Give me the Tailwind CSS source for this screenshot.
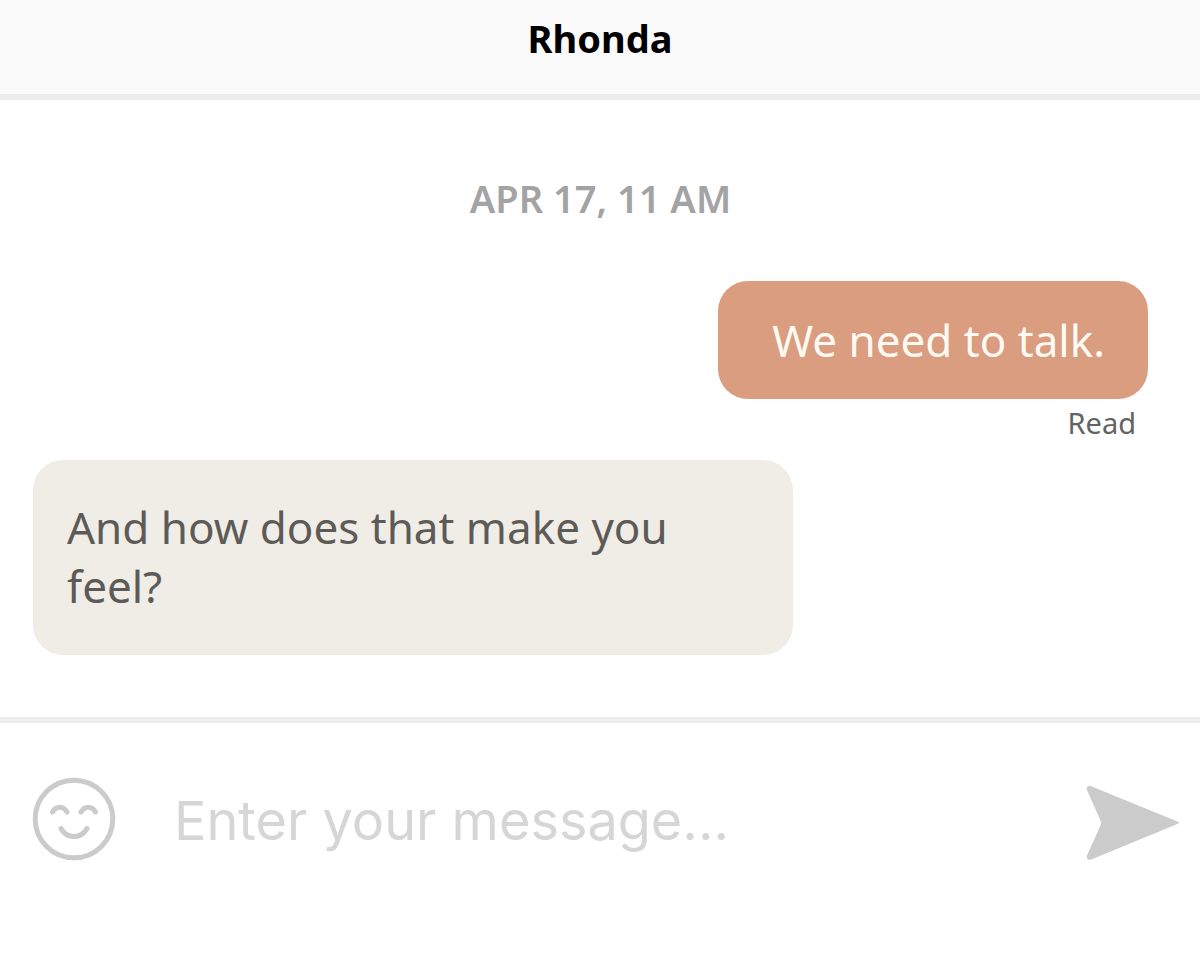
<!DOCTYPE html>
<html lang="en">
<head>
  <meta charset="UTF-8" />
  <meta name="viewport" content="width=device-width, initial-scale=1" />
  <title>Rhonda</title>
  <script src="https://cdn.jsdelivr.net/npm/@tailwindcss/browser@4"></script>
</head>
<body class="flex flex-col min-h-screen bg-white font-['Noto_Sans',sans-serif]">
  <header class="bg-[#fafafa] border-b-6 border-[#ededed] pt-4 pb-[34px] text-center">
    <h1 class="text-[38px] leading-[44px] font-bold text-black">Rhonda</h1>
  </header>

  <main class="pl-[33px] pr-[52px] pt-[76px] pb-[62px]">
    <p class="pl-5 text-center text-[38px] leading-[44px] font-semibold text-[#a3a3a3]">APR 17, 11 AM</p>

    <div class="mt-[61px] flex flex-col items-end">
      <p class="rounded-[30px] bg-[#da9d80] pl-[54px] pr-[43px] py-[29px] text-[44px] leading-[60px] text-[#fffaf3]">We need to talk.</p>
      <span class="mt-1 mr-3 text-[29px] leading-[40px] text-[#636363]">Read</span>
    </div>

    <div class="mt-[17px] w-[760px] max-w-full rounded-[30px] bg-[#f0ede6] pl-[34px] pr-20 pt-[38px] pb-[39px]">
      <p class="text-[44px] leading-[59px] text-[#5d5b58]">And how does that make you feel?</p>
    </div>
  </main>

  <form class="flex items-center border-t-6 border-[#ededed] pl-8 pr-5 pt-[54px] pb-8" onsubmit="return false">
    <button type="button" aria-label="Emoji" class="shrink-0">
      <svg class="size-[84px]" viewBox="0 0 84 84" fill="none" stroke="#cbcbcb" stroke-linecap="round">
        <circle cx="42" cy="42" r="38.800" stroke-width="5" />
        <path d="M20.500 35c3.500-6.500 11-6.500 14.500 0M49 35c3.500-6.500 11-6.500 14.500 0M29 51.500c5.500 10.500 20.500 10.500 26 0" stroke-width="5" />
      </svg>
    </button>
    <input type="text" aria-label="Message" placeholder="Enter your message..." class="mt-1 ml-[58px] min-w-0 flex-1 font-['Inter',sans-serif] text-[54px] leading-[64px] text-[#5d5b58] placeholder:text-[#d6d6d6] focus:outline-none" />
    <button type="submit" aria-label="Send" class="mt-[7px] shrink-0">
      <svg class="w-[94px] h-[76px]" viewBox="0 0 94 76" fill="#cbcbcb">
        <path d="M1.200 5.500C-.2 2.200 2 0 5.200 1.200L92 36.700q2 1 0 2L5.200 74.500C2 75.700-.2 73.200 1.200 70L14.700 40q1-2 0-4z" />
      </svg>
    </button>
  </form>
</body>
</html>
